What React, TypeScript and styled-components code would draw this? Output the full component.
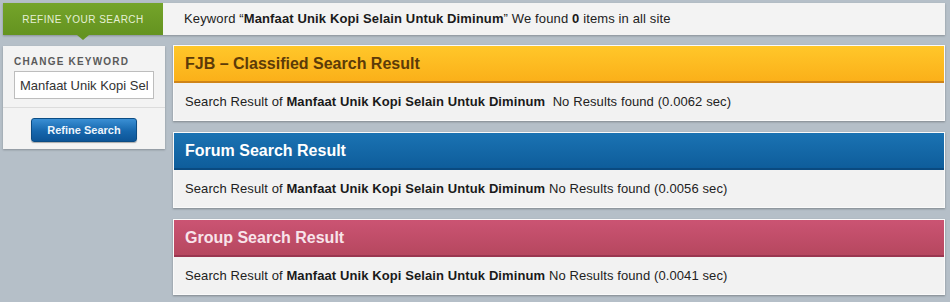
import styled, { createGlobalStyle } from "styled-components";

const GlobalStyle = createGlobalStyle`
html, body {
  margin: 0;
  padding: 0;
  background: #b5bfc8;
  font-family: "Liberation Sans", Arial, sans-serif;
}
`;

const Page = styled.div`
width: 950px;
height: 302px;
padding: 3px 5px 0 3px;
box-sizing: border-box;
`;

const TopBar = styled.div`
display: flex;
align-items: stretch;
height: 32px;
background: #f3f3f3;
box-shadow: 0 1px 2px rgba(0, 0, 0, 0.25);
`;

const Tab = styled.div`
position: relative;
width: 160px;
display: flex;
align-items: center;
justify-content: center;
background: linear-gradient(#74a42a, #649320);
color: #e6f0d6;
font-size: 10px;
letter-spacing: 0.5px;
&::after {
  content: "";
  position: absolute;
  left: 74px;
  bottom: -5px;
  border-left: 6px solid transparent;
  border-right: 6px solid transparent;
  border-top: 5px solid #649320;
}
`;

const Summary = styled.div`
padding-left: 21px;
line-height: 32px;
font-size: 13px;
letter-spacing: 0.13px;
color: #222;
white-space: pre;
b {
  color: #1a1a1a;
}
`;

const Body = styled.div`
display: flex;
align-items: flex-start;
gap: 8px;
margin-top: 10px;
`;

const Side = styled.div`
width: 162px;
background: #f3f3f3;
box-shadow: 0 1px 2px rgba(0, 0, 0, 0.25);
margin-top: 1px;
`;

const SideTop = styled.div`
padding: 10px 11px 8px 11px;
border-bottom: 1px solid #dcdcdc;
`;

const Label = styled.div`
font-size: 10px;
font-weight: bold;
color: #5a5a5a;
letter-spacing: 1.2px;
margin-bottom: 4px;
`;

const Input = styled.input`
box-sizing: border-box;
width: 140px;
height: 28px;
border: 1px solid #bdbdbd;
background: #fff;
padding: 0 5px;
font-family: "Liberation Sans", Arial, sans-serif;
font-size: 13px;
color: #333;
outline: none;
`;

const SideBottom = styled.div`
display: flex;
justify-content: center;
padding: 10px 0 7px;
`;

const Button = styled.button`
width: 106px;
height: 24px;
border: 1px solid #0b4c84;
border-radius: 3px;
background: linear-gradient(#3a8fd4, #1667ad 55%, #0d5597);
color: #eef5fc;
font-family: "Liberation Sans", Arial, sans-serif;
font-size: 11px;
font-weight: bold;
box-shadow: 0 1px 1px rgba(0, 0, 0, 0.3);
`;

const Results = styled.div`
flex: 1;
display: flex;
flex-direction: column;
gap: 11px;
`;

const Card = styled.div`
background: #f2f2f2;
border: 1px solid #fafafa;
box-shadow: 0 1px 2px rgba(0, 0, 0, 0.3);
`;

type Tone = "fjb" | "forum" | "group";

const tones: Record<Tone, { bg: string; line: string; text: string }> = {
  fjb: { bg: "linear-gradient(#ffc72a, #fbb019)", line: "#cf8519", text: "#5c3b08" },
  forum: { bg: "linear-gradient(#1b73b3, #0e5d9b)", line: "#0a4a80", text: "#ffffff" },
  group: { bg: "linear-gradient(#cb5473, #b6475f)", line: "#9a3650", text: "#f8e4ea" },
};

const CardHead = styled.div<{ $tone: Tone }>`
height: 35px;
line-height: 35px;
padding-left: 11px;
background: ${(p) => tones[p.$tone].bg};
border-bottom: 2px solid ${(p) => tones[p.$tone].line};
color: ${(p) => tones[p.$tone].text};
font-size: 16px;
font-weight: bold;
`;

const CardBody = styled.div`
height: 37px;
line-height: 37px;
padding-left: 11px;
font-size: 13px;
letter-spacing: 0.1px;
color: #222;
white-space: pre;
b {
  color: #1a1a1a;
}
`;

const results: { tone: Tone; title: string; gap: string; time: string }[] = [
  { tone: "fjb", title: "FJB – Classified Search Result", gap: "  ", time: "0.0062" },
  { tone: "forum", title: "Forum Search Result", gap: " ", time: "0.0056" },
  { tone: "group", title: "Group Search Result", gap: " ", time: "0.0041" },
];

function App() {
  return (
    <Page>
      <GlobalStyle />
      <TopBar>
        <Tab>REFINE YOUR SEARCH</Tab>
        <Summary>
          {"Keyword “"}<b>Manfaat Unik Kopi Selain Untuk Diminum</b>{"” We found "}<b>0</b>{" items in all site"}
        </Summary>
      </TopBar>
      <Body>
        <Side>
          <SideTop>
            <Label>CHANGE KEYWORD</Label>
            <Input defaultValue="Manfaat Unik Kopi Selain Untuk Diminum" />
          </SideTop>
          <SideBottom>
            <Button>Refine Search</Button>
          </SideBottom>
        </Side>
        <Results>
          {results.map((r) => (
            <Card key={r.tone}>
              <CardHead $tone={r.tone}>{r.title}</CardHead>
              <CardBody>
                {"Search Result of "}<b>Manfaat Unik Kopi Selain Untuk Diminum</b>
                {r.gap + "No Results found (" + r.time + " sec)"}
              </CardBody>
            </Card>
          ))}
        </Results>
      </Body>
    </Page>
  );
}

export default App;
